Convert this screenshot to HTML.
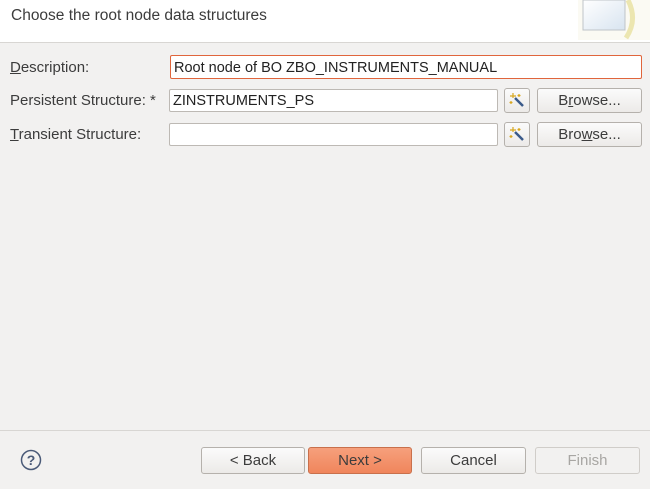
<!DOCTYPE html>
<html><head><style>
body{margin:0;width:650px;height:489px;background:#f2f1f0;font-family:"Liberation Sans",sans-serif;font-size:14px;color:#3c3c3c;position:relative;overflow:hidden}
.a{position:absolute}
.hdr{left:0;top:0;width:650px;height:42px;background:#fff;border-bottom:1px solid #d8d6d3}
.inp{background:#fff;border:1px solid #bdb9b4;border-radius:2px;box-sizing:border-box;padding-left:3px;line-height:23px;color:#222}
.btn{box-sizing:border-box;border:1px solid #b5b1ac;border-radius:3px;background:linear-gradient(#fbfbfb,#eceae8);text-align:center;color:#3c3c3c}
.lbl{left:10px;font-size:15px}
</style></head><body>
<div class="a hdr"></div>
<div class="a" style="left:11px;top:7px;color:#3c3c3c;font-size:15.5px">Choose the root node data structures</div>
<svg class="a" style="left:578px;top:0" width="72" height="40"><defs><linearGradient id="g" x1="0" y1="0" x2="1" y2="1"><stop offset="0" stop-color="#fff"/><stop offset="1" stop-color="#d8e4f0"/></linearGradient></defs><rect x="0" y="0" width="72" height="40" fill="#fbfaf3"/><rect x="5" y="0" width="42" height="30" fill="url(#g)" stroke="#bfc4c8"/><path d="M50 0 Q60 20 48 38" stroke="#ece6b0" stroke-width="5" fill="none"/></svg>
<div class="a lbl" style="top:59px"><u>D</u>escription:</div>
<div class="a inp" style="left:170px;top:55px;width:472px;height:24px;border-color:#e0653c;font-size:14.5px;line-height:24px">Root node of BO ZBO_INSTRUMENTS_MANUAL</div>
<div class="a lbl" style="top:92px">Persistent Structure: *</div>
<div class="a inp" style="left:169px;top:89px;width:329px;height:23px;font-size:14.5px">ZINSTRUMENTS_PS</div>
<div class="a btn" style="left:504px;top:88px;width:26px;height:25px"></div>
<svg class="a" style="left:509px;top:92px" width="16" height="16"><path d="M6 6 L14 14" stroke="#3a5a8a" stroke-width="2.5"/><path d="M4 1v5M1 4h6M10 2v3M8.5 3.5h3M2 9v3M.5 10.5h3" stroke="#d8a820" stroke-width="1.2"/></svg>
<div class="a btn" style="left:537px;top:88px;width:105px;height:25px;line-height:23px;font-size:15px">B<u>r</u>owse...</div>
<div class="a lbl" style="top:126px"><u>T</u>ransient Structure:</div>
<div class="a inp" style="left:169px;top:123px;width:329px;height:23px"></div>
<div class="a btn" style="left:504px;top:122px;width:26px;height:25px"></div>
<svg class="a" style="left:509px;top:126px" width="16" height="16"><path d="M6 6 L14 14" stroke="#3a5a8a" stroke-width="2.5"/><path d="M4 1v5M1 4h6M10 2v3M8.5 3.5h3M2 9v3M.5 10.5h3" stroke="#d8a820" stroke-width="1.2"/></svg>
<div class="a btn" style="left:537px;top:122px;width:105px;height:25px;line-height:23px;font-size:15px">Bro<u>w</u>se...</div>
<div class="a" style="left:0;top:430px;width:650px;height:1px;background:#d8d6d3"></div>
<svg class="a" style="left:20px;top:449px" width="22" height="22"><circle cx="11" cy="11" r="9.5" fill="none" stroke="#4a5a78" stroke-width="1.5"/><text x="11" y="16" text-anchor="middle" font-family="Liberation Sans" font-size="14" font-weight="bold" fill="#4a5a78">?</text></svg>
<div class="a btn" style="left:201px;top:447px;width:104px;height:27px;line-height:26px;font-size:15px">&lt; Back</div>
<div class="a btn" style="left:308px;top:447px;width:104px;height:27px;line-height:26px;font-size:15px;background:linear-gradient(#f6a07c,#f0855c);border-color:#c8704c">Next &gt;</div>
<div class="a btn" style="left:421px;top:447px;width:105px;height:27px;line-height:26px;font-size:15px">Cancel</div>
<div class="a btn" style="left:535px;top:447px;width:105px;height:27px;line-height:26px;font-size:15px;color:#a8a6a3;border-color:#d0cdc9;background:#f2f1f0">Finish</div>
</body></html>
